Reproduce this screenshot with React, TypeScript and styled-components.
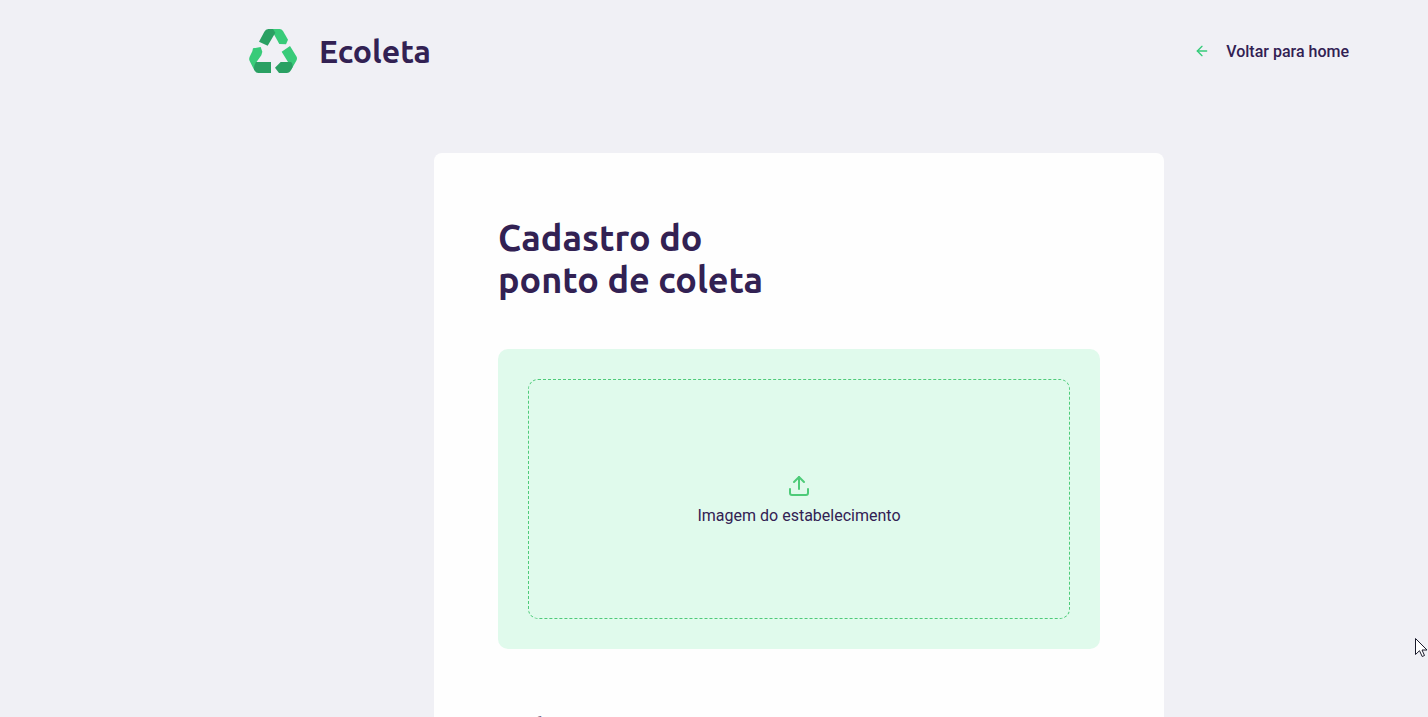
import React from "react";
import styled, { createGlobalStyle } from "styled-components";
import { FiArrowLeft, FiUpload } from "react-icons/fi";

const GlobalStyle = createGlobalStyle`
  * { margin: 0; padding: 0; box-sizing: border-box; }
  body {
    background: #f0f0f5;
    color: #322153;
    font-family: Roboto, "Liberation Sans", sans-serif;
    font-size: 16px;
    overflow-x: hidden;
  }
`;

const Page = styled.div`
  padding: 0 79px 0 249px;
`;

const Header = styled.header`
  display: flex;
  align-items: center;
  justify-content: space-between;
  height: 102px;
`;

const Brand = styled.div`
  display: flex;
  align-items: center;
  gap: 22px;
`;

const BrandName = styled.span`
  font-family: Ubuntu, "Noto Sans", sans-serif;
  font-weight: 700;
  font-size: 32px;
  line-height: 40px;
`;

const BackLink = styled.a`
  display: flex;
  align-items: center;
  gap: 16px;
  color: #322153;
  font-weight: 500;
  line-height: 19px;
  text-decoration: none;

  svg {
    color: #34cb79;
  }
`;

const Form = styled.form`
  max-width: 730px;
  margin: 51px auto 0;
  padding: 64px;
  background: #fefefe;
  border-radius: 8px;
`;

const Title = styled.h1`
  font-family: Ubuntu, "Noto Sans", sans-serif;
  font-weight: 700;
  font-size: 36px;
  line-height: 42px;
`;

const Dropzone = styled.label`
  display: flex;
  height: 300px;
  margin-top: 48px;
  padding: 30px;
  background: #e0faec;
  border-radius: 10px;
  cursor: pointer;
`;

const FileInput = styled.input`
  position: absolute;
  width: 1px;
  height: 1px;
  opacity: 0;
`;

const DropArea = styled.span`
  display: flex;
  flex: 1;
  flex-direction: column;
  align-items: center;
  justify-content: center;
  gap: 10px;
  border: 1px dashed #4ecb79;
  border-radius: 10px;
  line-height: 16px;

  svg {
    color: #4ecb79;
  }
`;

const Fieldset = styled.fieldset`
  margin-top: 64px;
  border: 0;
`;

const Legend = styled.legend`
  font-family: Ubuntu, "Noto Sans", sans-serif;
  font-weight: 700;
  font-size: 24px;
  line-height: 28px;
`;

const Pointer = styled.svg`
  position: fixed;
  right: 0;
  bottom: 59px;
  pointer-events: none;
`;

const Logo = () => (
  <svg width="48" height="44" viewBox="27 27 144 132" aria-hidden="true">
    <path fill="#38cb79" d="M95 27H119Q125 27 129 33L144 59 138 73 118 72 100 40Z" />
    <path fill="#2aa063" d="M57 65 73 35Q77 27 85 27H99L106 38 83 77Z" />
    <path fill="#38cb79" d="M39 85 62 81 67 95 64 106 48 128 43 151 29 123Q26 117 29 110L37 94Z" />
    <path fill="#2aa063" d="M48 126H93V159H55Q48 159 44 152L42 148Q41 136 48 126Z" />
    <path fill="#38cb79" d="M125 95 150 78 169 109Q173 115 169 122L153 150 140 157 139 126 144 126Z" />
    <path fill="#2aa063" d="M105 143 122 126H152Q158 128 158 141L153 150Q149 159 140 159H117Z" />
  </svg>
);

export default function App() {
  return (
    <>
      <GlobalStyle />
      <Page>
        <Header>
          <Brand>
            <Logo />
            <BrandName>Ecoleta</BrandName>
          </Brand>
          <BackLink href="#home">
            <FiArrowLeft size={16} />
            Voltar para home
          </BackLink>
        </Header>
        <Form>
          <Title>
            Cadastro do
            <br />
            ponto de coleta
          </Title>
          <Dropzone>
            <FileInput type="file" accept="image/*" />
            <DropArea>
              <FiUpload size={24} />
              Imagem do estabelecimento
            </DropArea>
          </Dropzone>
          <Fieldset>
            <Legend>Dados</Legend>
          </Fieldset>
        </Form>
      </Page>
      <Pointer width="13" height="20" viewBox="0 0 13 20" aria-hidden="true">
        <path
          d="M.5.5V16.5L4.5 12.7 7.2 18.5 9.5 17.5 7 12H12Z"
          fill="#fff"
          stroke="#1b1b2b"
        />
      </Pointer>
    </>
  );
}
